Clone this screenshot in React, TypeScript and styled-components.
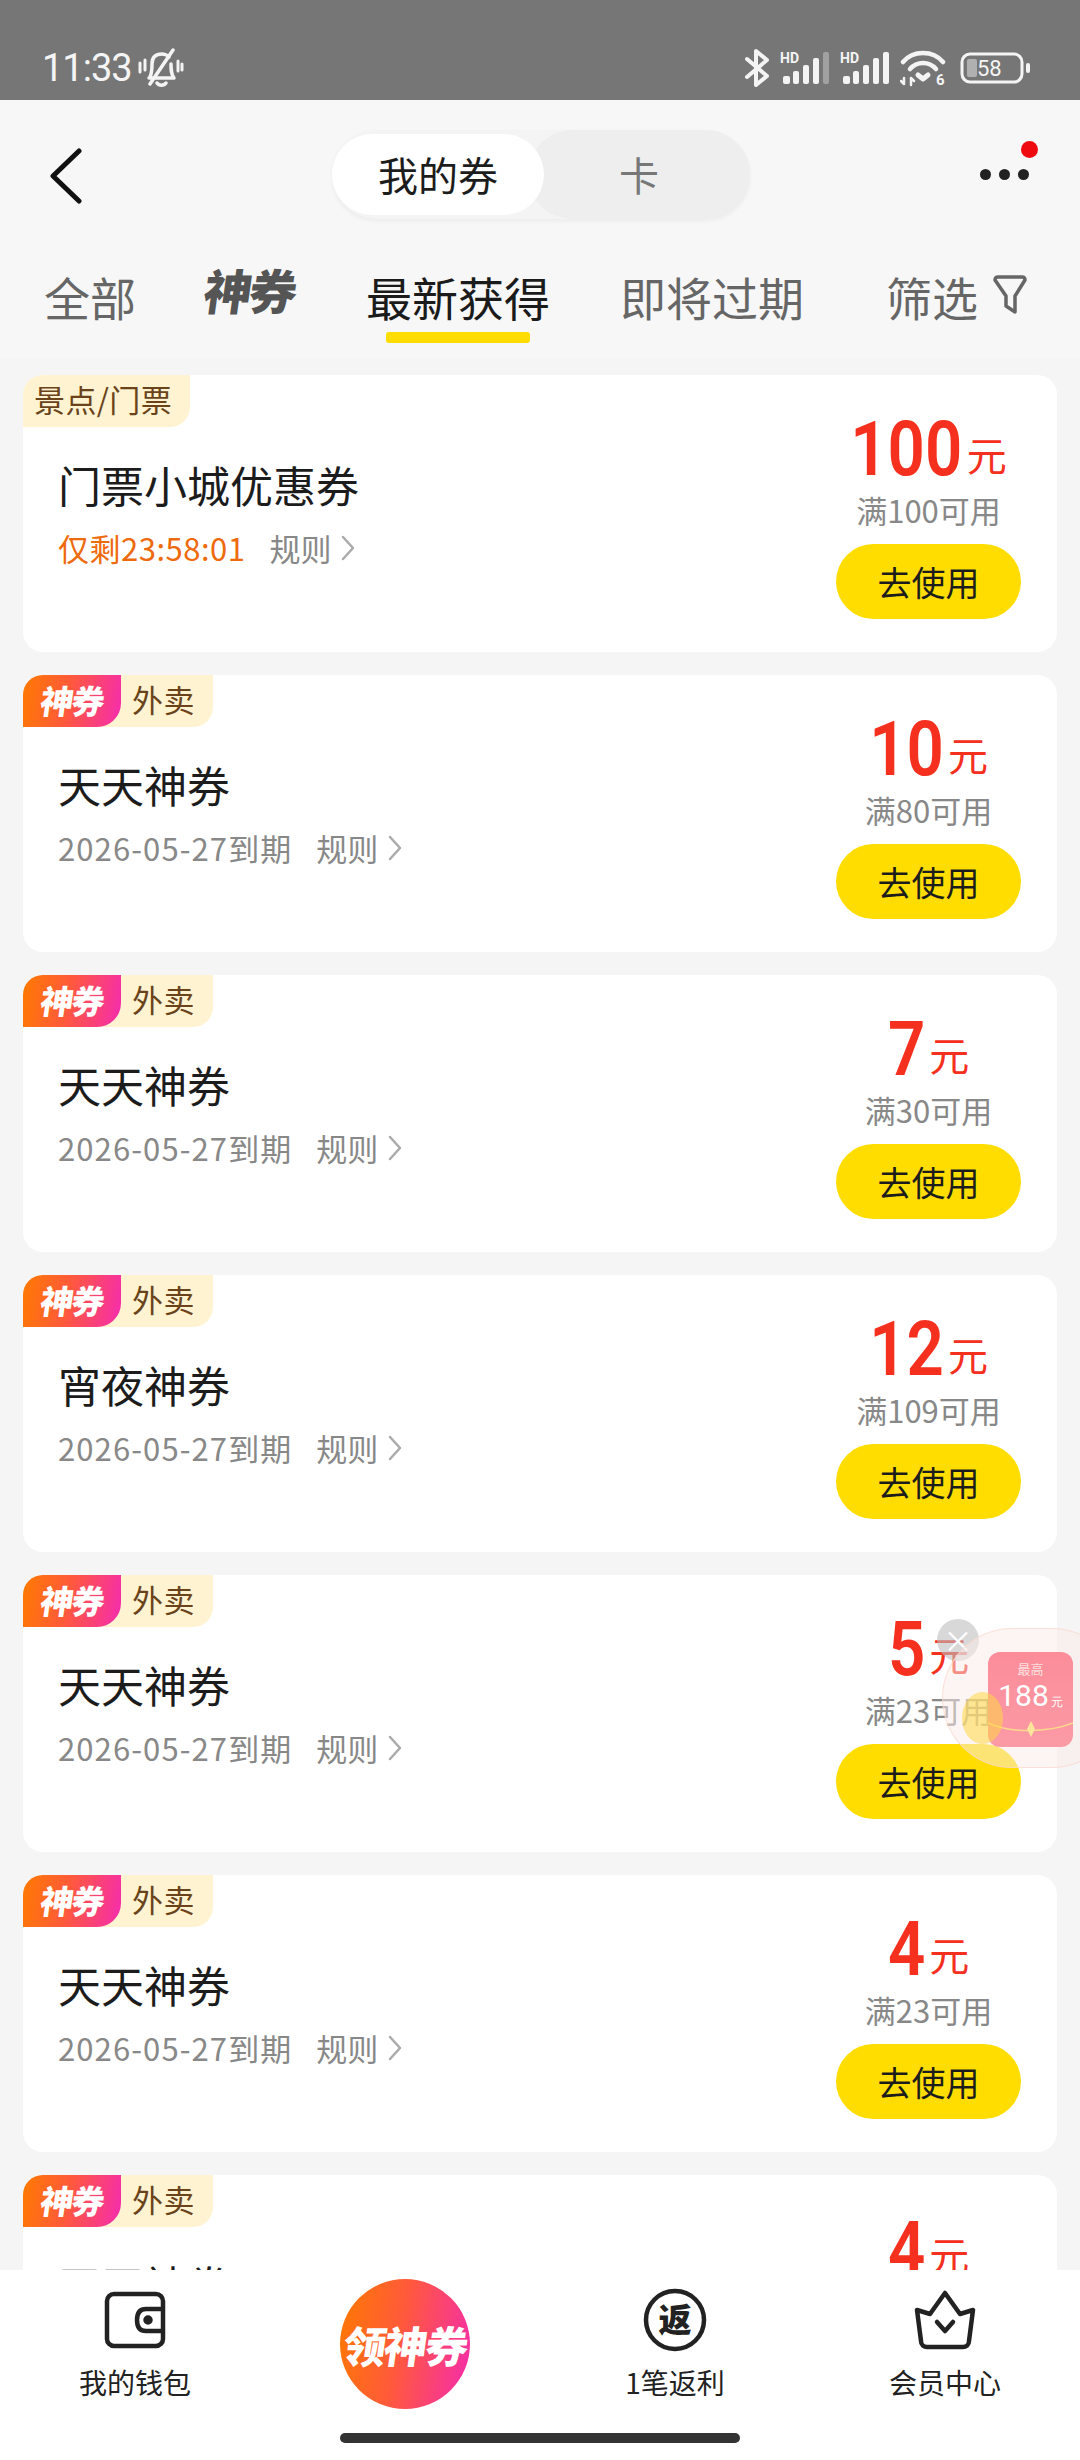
import React from 'react';
import styled, { createGlobalStyle } from 'styled-components';

const GRADIENT = 'linear-gradient(100deg, #ff7a00 0%, #ff5a3a 45%, #f52bb0 100%)';

const GlobalStyle = createGlobalStyle`
  html, body {
    margin: 0;
    padding: 0;
    background: #f5f5f5;
  }
  * {
    box-sizing: border-box;
  }
`;

const Page = styled.div`
  position: relative;
  width: 1080px;
  height: 2460px;
  overflow: hidden;
  display: flex;
  flex-direction: column;
  background: #f5f5f5;
  font-family: 'Noto Sans CJK SC', 'Noto Sans', sans-serif;
`;

const StatusBar = styled.div`
  height: 100px;
  flex: none;
  background: #767676;
  color: #f4f4f4;
  display: flex;
  align-items: center;
  justify-content: space-between;
  padding: 36px 50px 0 42px;
`;

const StatusLeft = styled.div`
  display: flex;
  align-items: center;
  gap: 6px;
`;

const Clock = styled.span`
  font-family: 'Roboto', sans-serif;
  font-size: 38px;
  line-height: 44px;
  letter-spacing: -1px;
`;

const StatusRight = styled.div`
  display: flex;
  align-items: center;
  gap: 10px;
`;

const Header = styled.div`
  height: 137px;
  flex: none;
  background: #f7f7f7;
  position: relative;
  display: flex;
  align-items: center;
  justify-content: space-between;
  padding: 0 42px 0 50px;
`;

const BackIcon = styled.svg`
  margin-top: 14px;
`;

const Switcher = styled.div`
  width: 418px;
  height: 89px;
  margin-top: 11px;
  margin-left: 20px;
  border-radius: 45px;
  background: #f4f4f4;
  box-shadow: 0 2px 4px rgba(0, 0, 0, 0.05);
  display: flex;
  align-items: center;
`;

const SwitchItem = styled.div<{ $active?: boolean }>`
  display: flex;
  align-items: center;
  justify-content: center;
  font-size: 40px;
  border-radius: 45px;
  ${(p) =>
    p.$active
      ? `width: 212px; height: 81px; background: #fff; color: #1c1c1c; position: relative;`
      : `flex: 1; height: 89px; margin-left: -16px; background: #eeeeee; color: #777;`}
`;

const MoreButton = styled.div`
  position: relative;
  width: 58px;
  height: 60px;
  display: flex;
  align-items: center;
  gap: 8px;
  padding-top: 12px;
`;

const MoreDot = styled.i`
  width: 11px;
  height: 11px;
  border-radius: 50%;
  background: #222;
`;

const RedDot = styled.i`
  position: absolute;
  top: 2px;
  right: 0;
  width: 17px;
  height: 17px;
  border-radius: 50%;
  background: #ee0a0f;
`;

const Tabs = styled.div`
  height: 121px;
  flex: none;
  background: #f7f7f7;
  display: flex;
  gap: 70px;
  padding: 0 0 0 44px;
`;

const Tab = styled.div<{ $active?: boolean }>`
  position: relative;
  height: 104px;
  display: flex;
  align-items: center;
  font-size: 46px;
  padding-top: 14px;
  white-space: nowrap;
  color: ${(p) => (p.$active ? '#1b1b1b' : '#666')};

  ${(p) =>
    p.$active &&
    `&::after {
      content: '';
      position: absolute;
      left: 20px;
      right: 20px;
      bottom: -2px;
      height: 11px;
      border-radius: 3px;
      background: #ffdd00;
    }`}
`;

const ShenTab = styled.div`
  width: 90px;
  height: 84px;
  display: flex;
  align-items: center;
  font-size: 48px;
  font-weight: 900;
  color: #555;
  padding-top: 20px;
  letter-spacing: -3px;
  white-space: nowrap;
  transform: skewX(-8deg);
`;

const FilterTab = styled(Tab)`
  gap: 14px;
  margin-left: 12px;
`;

const List = styled.div`
  flex: 1;
  min-height: 0;
  overflow: hidden;
  display: flex;
  flex-direction: column;
  gap: 23px;
  padding: 17px 23px 0;
`;

const Card = styled.div`
  position: relative;
  flex: none;
  height: 277px;
  background: #fff;
  border-radius: 20px;
  display: flex;
  justify-content: space-between;
`;

const TagRow = styled.div`
  position: absolute;
  top: 0;
  left: 0;
  height: 52px;
  display: flex;
  background: #fff3d1;
  border-radius: 20px 0 20px 0;
`;

const ShenTag = styled.span`
  width: 98px;
  height: 52px;
  padding-bottom: 3px;
  background: ${GRADIENT};
  border-radius: 20px 0 24px 0;
  color: #fff;
  font-size: 33px;
  font-weight: 900;
  letter-spacing: -2px;
  display: flex;
  align-items: center;
  justify-content: center;
`;

const SkewText = styled.span`
  display: inline-block;
  transform: skewX(-8deg);
`;

const CategoryTag = styled.span`
  padding: 0 18px 0 11px;
  font-size: 31px;
  line-height: 48px;
  letter-spacing: 0.4px;
  color: #6a431a;
  white-space: nowrap;
`;

const CardMain = styled.div`
  padding: 78px 0 0 35px;
`;

const CardTitle = styled.div`
  font-size: 43px;
  line-height: 62px;
  color: #1c1c1c;
`;

const MetaRow = styled.div`
  margin-top: 10px;
  display: flex;
  align-items: center;
  font-size: 31px;
  line-height: 46px;
  color: #888;
`;

const Expiry = styled.span<{ $urgent?: boolean }>`
  color: ${(p) => (p.$urgent ? '#ee6a0c' : '#888')};
  letter-spacing: ${(p) => (p.$urgent ? '0.5px' : '1.1px')};
  margin-right: 24px;
`;

const RuleArrow = styled.svg`
  margin-left: 10px;
`;

const CardSide = styled.div`
  width: 185px;
  margin-right: 36px;
  padding-top: 36px;
  display: flex;
  flex-direction: column;
  align-items: center;
`;

const Amount = styled.div`
  display: flex;
  align-items: baseline;
  height: 76px;
  line-height: 76px;
  color: #f5301f;
  white-space: nowrap;
`;

// 숫자 폭이 레퍼런스보다 넓어서 가로로 줄임
const AmountValue = styled.span<{ $digits: number }>`
  display: inline-block;
  font-family: 'Roboto', sans-serif;
  font-size: 76px;
  font-weight: 600;
  transform: scaleX(0.86);
  transform-origin: right center;
  margin-left: ${(p) => p.$digits * -6}px;
`;

const AmountUnit = styled.span`
  font-size: 40px;
  margin-left: 4px;
  transform: translateY(-4px);
`;

const Threshold = styled.div`
  margin-top: 1px;
  font-size: 31px;
  line-height: 44px;
  color: #888;
  white-space: nowrap;
`;

const UseButton = styled.div`
  margin-top: 12px;
  width: 185px;
  height: 75px;
  flex: none;
  border-radius: 38px;
  background: #ffdd00;
  color: #1c1c1c;
  font-size: 34px;
  display: flex;
  align-items: center;
  justify-content: center;
`;

const BottomBar = styled.div`
  position: absolute;
  left: 0;
  right: 0;
  bottom: 0;
  height: 190px;
  background: #fff;
  display: grid;
  grid-template-columns: 270px 270px 270px 270px;
  padding-top: 12px;
`;

const NavItem = styled.div`
  display: flex;
  flex-direction: column;
  align-items: center;
  height: 120px;
  font-size: 28px;
  line-height: 40px;
  color: #222;
  gap: 8px;
`;

const NavIcon = styled.div`
  height: 68px;
  margin-top: 4px;
  display: flex;
  align-items: center;
  justify-content: center;
`;

const GrabButton = styled.div`
  width: 130px;
  height: 130px;
  margin: -3px auto 0;
  border-radius: 50%;
  background: ${GRADIENT};
  color: #fff;
  font-size: 43px;
  font-weight: 900;
  letter-spacing: -2px;
  display: flex;
  align-items: center;
  justify-content: center;
  white-space: nowrap;
`;

const HomeBar = styled.div`
  position: absolute;
  left: 340px;
  bottom: 17px;
  width: 400px;
  height: 10px;
  border-radius: 5px;
  background: #333;
`;

const Floater = styled.div`
  position: absolute;
  left: 942px;
  top: 1628px;
  width: 180px;
  height: 140px;
  border-radius: 70px;
  background: rgba(250, 236, 232, 0.5);
  border: 1px solid rgba(250, 215, 205, 0.7);
`;

const FloatCard = styled.div`
  position: absolute;
  left: 45px;
  top: 23px;
  width: 85px;
  height: 95px;
  border-radius: 12px;
  background: linear-gradient(180deg, #fb8d99 0%, #fb9aa5 100%);
  color: #fff;
  text-align: center;
`;

const FloatSmall = styled.div`
  font-size: 13px;
  line-height: 18px;
  margin-top: 8px;
  color: #fde0e0;
`;

const FloatValue = styled.div`
  font-family: 'Roboto', sans-serif;
  font-size: 30px;
  line-height: 36px;
  white-space: nowrap;

  small {
    font-size: 12px;
    margin-left: 2px;
  }
`;

const FloatLine = styled.svg`
  position: absolute;
  left: 0;
  bottom: 8px;
`;

const FloatClose = styled.div`
  position: absolute;
  left: 937px;
  top: 1619px;
  width: 42px;
  height: 42px;
  border-radius: 50%;
  background: rgba(190, 190, 190, 0.6);
  color: #fff;
  font-size: 30px;
  line-height: 40px;
  text-align: center;
`;

const FloatCoin = styled.div`
  position: absolute;
  left: 962px;
  top: 1692px;
  width: 41px;
  height: 52px;
  border-radius: 50%;
  background: rgba(255, 215, 70, 0.55);
`;

const coupons = [
  { title: '门票小城优惠券', amount: '100', limit: '满100可用', expiry: '仅剩23:58:01', urgent: true, tag: '景点/门票' },
  { title: '天天神券', amount: '10', limit: '满80可用', expiry: '2026-05-27到期', tag: '外卖' },
  { title: '天天神券', amount: '7', limit: '满30可用', expiry: '2026-05-27到期', tag: '外卖' },
  { title: '宵夜神券', amount: '12', limit: '满109可用', expiry: '2026-05-27到期', tag: '外卖' },
  { title: '天天神券', amount: '5', limit: '满23可用', expiry: '2026-05-27到期', tag: '外卖' },
  { title: '天天神券', amount: '4', limit: '满23可用', expiry: '2026-05-27到期', tag: '外卖' },
  { title: '天天神券', amount: '4', limit: '满23可用', expiry: '2026-05-27到期', tag: '外卖' },
];

const SignalIcon = ({ dimLast }: { dimLast?: boolean }) => (
  <svg width="50" height="40" viewBox="0 -4 50 40" fill="#f4f4f4">
    <text x="0" y="11" fontFamily="Roboto, sans-serif" fontSize="14" fontWeight="700">HD</text>
    <rect x="3" y="24" width="7" height="8" rx="2" />
    <rect x="13" y="19" width="6" height="13" rx="2" />
    <rect x="23" y="13" width="6" height="19" rx="2" />
    <rect x="33" y="6" width="6" height="26" rx="2" />
    <rect x="43" y="0" width="6" height="32" rx="2" opacity={dimLast ? 0.35 : 1} />
  </svg>
);

const StatusIcons = () => (
  <StatusRight>
    <svg width="26" height="40" viewBox="0 0 26 40" fill="none" stroke="#f4f4f4" strokeWidth="4" strokeLinecap="round" strokeLinejoin="round">
      <path d="M3 11 L23 28 L12 37 V3 L23 12 L3 29" />
    </svg>
    <SignalIcon dimLast />
    <SignalIcon />
    <svg width="46" height="44" viewBox="0 -4 46 44" fill="none" stroke="#f4f4f4" strokeWidth="4.5" strokeLinecap="round">
      <path d="M3 12 C13 0 33 0 43 12" />
      <path d="M10 19 C17 11 29 11 36 19" />
      <path d="M18 25 L23 29 L28 25" strokeWidth="5" strokeLinejoin="round" />
      <path d="M4 28 V34 M1 31 L4 34 M11 35 V28 M11 28 L14 31" strokeWidth="2.5" />
      <text x="36" y="35" fontFamily="Roboto, sans-serif" fontSize="15" fontWeight="700" fill="#f4f4f4" stroke="none">6</text>
    </svg>
    <svg width="70" height="32" viewBox="0 0 70 32" fill="none" style={{ marginLeft: 4 }}>
      <rect x="2" y="2" width="60" height="28" rx="8" stroke="#f4f4f4" strokeWidth="3" />
      <rect x="7" y="7" width="10" height="18" rx="2" fill="#b0b0b0" />
      <rect x="66" y="11" width="4" height="10" rx="2" fill="#f4f4f4" />
      <text x="17" y="24" fontFamily="Roboto, sans-serif" fontSize="22" fill="#f4f4f4">58</text>
    </svg>
  </StatusRight>
);

const MuteIcon = () => (
  <svg width="46" height="40" viewBox="0 0 46 40" fill="none" stroke="#f4f4f4" strokeWidth="3.5" strokeLinecap="round" strokeLinejoin="round">
    <path d="M12 29 C14 25 14 21 14 16 C14 9 18 6 24 6 C27 6 29 7 31 9" />
    <path d="M33 16 C33 22 33 26 36 30 H11" />
    <path d="M19 35 C21 38 26 38 28 35" />
    <path d="M12 36 L35 2" />
    <path d="M2 15 V24 M7 12 V22 M40 13 V23 M44 16 V22" strokeWidth="3" />
  </svg>
);

const App: React.FC = () => (
  <Page>
    <GlobalStyle />
    <StatusBar>
      <StatusLeft>
        <Clock>11:33</Clock>
        <MuteIcon />
      </StatusLeft>
      <StatusIcons />
    </StatusBar>

    <Header>
      <BackIcon width="32" height="56" viewBox="0 0 32 56" fill="none" stroke="#111" strokeWidth="5" strokeLinecap="round" strokeLinejoin="round">
        <path d="M29 3 L3 28 L29 53" />
      </BackIcon>
      <Switcher>
        <SwitchItem $active>我的券</SwitchItem>
        <SwitchItem>卡</SwitchItem>
      </Switcher>
      <MoreButton>
        <MoreDot />
        <MoreDot />
        <MoreDot />
        <RedDot />
      </MoreButton>
    </Header>

    <Tabs>
      <Tab>全部</Tab>
      <ShenTab>神券</ShenTab>
      <Tab $active>最新获得</Tab>
      <Tab>即将过期</Tab>
      <FilterTab>
        筛选
        <svg width="36" height="42" viewBox="0 0 36 42" fill="none" stroke="#666" strokeWidth="3.5" strokeLinejoin="round">
          <path d="M3 5 C3 3 4 2 6 2 H30 C32 2 33 3 33 5 L23 21 V37 L14 31 V21 Z" />
        </svg>
      </FilterTab>
    </Tabs>

    <List>
      {coupons.map((c, i) => (
        <Card key={i}>
          <TagRow>
            {!c.urgent && (
              <ShenTag>
                <SkewText>神券</SkewText>
              </ShenTag>
            )}
            <CategoryTag>{c.tag}</CategoryTag>
          </TagRow>
          <CardMain>
            <CardTitle>{c.title}</CardTitle>
            <MetaRow>
              <Expiry $urgent={c.urgent}>{c.expiry}</Expiry>
              规则
              <RuleArrow width="14" height="26" viewBox="0 0 14 26" fill="none" stroke="#aaa" strokeWidth="2.5" strokeLinecap="round" strokeLinejoin="round">
                <path d="M2 2 L12 13 L2 24" />
              </RuleArrow>
            </MetaRow>
          </CardMain>
          <CardSide>
            <Amount>
              <AmountValue $digits={c.amount.length}>{c.amount}</AmountValue>
              <AmountUnit>元</AmountUnit>
            </Amount>
            <Threshold>{c.limit}</Threshold>
            <UseButton>去使用</UseButton>
          </CardSide>
        </Card>
      ))}
    </List>

    <FloatClose>×</FloatClose>
    <Floater>
      <FloatCard>
        <FloatSmall>最高</FloatSmall>
        <FloatValue>
          188<small>元</small>
        </FloatValue>
        <FloatLine width="85" height="20" viewBox="0 0 85 20" fill="none">
          <path d="M0 4 C20 14 60 14 85 4" stroke="#fbd98a" strokeWidth="1.5" />
          <path d="M43 2 L47 10 L43 18 L39 10 Z" fill="#fde59a" />
        </FloatLine>
      </FloatCard>
    </Floater>
    <FloatCoin />

    <BottomBar>
      <NavItem>
        <NavIcon>
          <svg width="62" height="58" viewBox="0 0 62 58" fill="none" stroke="#222" strokeWidth="4.5" strokeLinejoin="round">
            <rect x="3" y="3" width="56" height="52" rx="7" />
            <path d="M59 18 H42 C35 18 33 23 33 29 C33 35 35 40 42 40 H59" />
            <circle cx="44" cy="29" r="2.5" fill="#222" />
          </svg>
        </NavIcon>
        我的钱包
      </NavItem>
      <div>
        <GrabButton>
          <SkewText>领神券</SkewText>
        </GrabButton>
      </div>
      <NavItem>
        <NavIcon>
          <svg width="64" height="64" viewBox="0 0 64 64">
            <circle cx="32" cy="32" r="29" fill="none" stroke="#222" strokeWidth="4.5" />
            <text x="32" y="44" textAnchor="middle" fontSize="33" fontWeight="900" fill="#222" fontFamily="'Noto Sans CJK SC', sans-serif">返</text>
          </svg>
        </NavIcon>
        1笔返利
      </NavItem>
      <NavItem>
        <NavIcon>
          <svg width="64" height="60" viewBox="0 0 64 60" fill="none" stroke="#222" strokeWidth="4.5" strokeLinejoin="round" strokeLinecap="round">
            <path d="M4 20 L17 24 L32 3 L47 24 L60 20 L56 51 C56 55 53 57 50 57 H14 C11 57 8 55 8 51 Z" />
            <path d="M24 32 L32 41 L40 32" />
          </svg>
        </NavIcon>
        会员中心
      </NavItem>
    </BottomBar>
    <HomeBar />
  </Page>
);

export default App;
